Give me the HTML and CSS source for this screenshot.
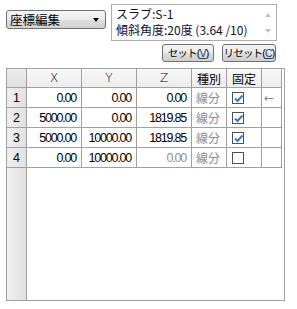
FILE: index.html
```html
<!DOCTYPE html>
<html lang="ja">
<head>
<meta charset="utf-8">
<link rel="stylesheet" href="styles.css">
</head>
<body>
<div class="top">
  <div class="select"><span>座標編集</span><span class="caret"></span></div>
  <div class="info">
    <div class="info-text">スラブ:S-1<br>傾斜角度:20度 (3.64 /10)</div>
    <div class="info-scroll"><span class="up"></span><span class="down"></span></div>
  </div>
</div>
<div class="actions">
  <button class="btn b1">セット(<u>V</u>)</button>
  <button class="btn b2">リセット(<u>C</u>)</button>
</div>
<div class="grid">
  <table>
    <tr class="head">
      <td class="rh c0"></td><td class="c1">X</td><td class="c2">Y</td><td class="c3">Z</td><td class="c4">種別</td><td class="c5">固定</td><td class="c6"></td>
    </tr>
    <tr>
      <td class="rh">1</td><td class="num">0.00</td><td class="num">0.00</td><td class="num">0.00</td><td class="kind">線分</td><td class="chk"><span class="box on"><svg width="11" height="11" viewBox="0 0 11 11"><path d="M2 5.5 L4.5 8 L9.5 2.5" fill="none" stroke="#3f74c0" stroke-width="2"/></svg></span></td><td class="arrow">←</td>
    </tr>
    <tr>
      <td class="rh">2</td><td class="num">5000.00</td><td class="num">0.00</td><td class="num">1819.85</td><td class="kind">線分</td><td class="chk"><span class="box on"><svg width="11" height="11" viewBox="0 0 11 11"><path d="M2 5.5 L4.5 8 L9.5 2.5" fill="none" stroke="#3f74c0" stroke-width="2"/></svg></span></td><td></td>
    </tr>
    <tr>
      <td class="rh">3</td><td class="num">5000.00</td><td class="num">10000.00</td><td class="num">1819.85</td><td class="kind">線分</td><td class="chk"><span class="box on"><svg width="11" height="11" viewBox="0 0 11 11"><path d="M2 5.5 L4.5 8 L9.5 2.5" fill="none" stroke="#3f74c0" stroke-width="2"/></svg></span></td><td></td>
    </tr>
    <tr>
      <td class="rh">4</td><td class="num">0.00</td><td class="num">10000.00</td><td class="num dim">0.00</td><td class="kind">線分</td><td class="chk"><span class="box"></span></td><td></td>
    </tr>
  </table>
</div>
</body>
</html>
```
FILE: styles.css
```css
body {
  margin: 0;
  width: 297px;
  height: 309px;
  background: #fff;
  font-family: "Noto Sans CJK JP", sans-serif;
  font-size: 12px;
  color: #000;
  overflow: hidden;
}
.top {
  display: flex;
  align-items: flex-start;
  gap: 5px;
  padding: 4px 0 0 6px;
}
.select {
  margin-top: 6px;
  width: 100px;
  height: 19px;
  box-sizing: border-box;
  border: 1px solid #707070;
  border-radius: 3px;
  background: linear-gradient(#f4f4f4, #ececec 50%, #dedede 50%, #d2d2d2);
  display: flex;
  align-items: center;
  justify-content: space-between;
  padding: 0 6px 0 3px;
  font-size: 12.5px;
  line-height: 17px;
}
.caret {
  width: 0;
  height: 0;
  border-left: 3.5px solid transparent;
  border-right: 3.5px solid transparent;
  border-top: 4px solid #000;
}
.info {
  width: 166px;
  height: 37px;
  box-sizing: border-box;
  border: 1px solid #abadb3;
  display: flex;
}
.info-text {
  flex: 1;
  padding: 1px 4px;
  font-size: 12px;
  line-height: 16px;
  color: #101030;
  white-space: nowrap;
}
.info-scroll {
  width: 17px;
  display: flex;
  flex-direction: column;
  justify-content: space-between;
  align-items: center;
  padding: 8px 0 7px;
  box-sizing: border-box;
}
.up, .down {
  width: 0;
  height: 0;
  border-left: 3.5px solid transparent;
  border-right: 3.5px solid transparent;
}
.up { border-bottom: 4px solid #c2c2c2; }
.down { border-top: 4px solid #c2c2c2; }
.actions {
  display: flex;
  justify-content: flex-end;
  gap: 8px;
  padding-right: 21px;
  margin-top: 3px;
}
.btn {
  height: 18px;
  box-sizing: border-box;
  border: 1px solid #707070;
  border-radius: 3px;
  background: linear-gradient(#f3f3f3, #ebebeb 50%, #dddddd 50%, #cfcfcf);
  font-family: "Liberation Sans", "Noto Sans CJK JP", sans-serif;
  font-size: 10.5px;
  letter-spacing: -0.8px;
  line-height: 14px;
  padding: 0;
  color: #000;
  white-space: nowrap;
  text-align: center;
}
.b1 { width: 52px; }
.b2 { width: 54px; }
.btn u { color: #1a3d8f; }
.grid {
  margin: 6px 0 0 6px;
  width: 279px;
  height: 233px;
  box-sizing: border-box;
  border: 1px solid #a0a0a0;
  background:
    linear-gradient(#a0a0a0, #a0a0a0) 19px 0 / 1px 100% no-repeat,
    linear-gradient(to right, #f0f0f0, #e0e0e0) 0 0 / 19px 100% no-repeat,
    #fff;
}
table {
  border-collapse: separate;
  border-spacing: 0;
  table-layout: fixed;
  width: 275px;
}
td {
  box-sizing: border-box;
  height: 20px;
  padding: 0;
  border-right: 1px solid #a0a0a0;
  border-bottom: 1px solid #a0a0a0;
  white-space: nowrap;
  overflow: hidden;
  line-height: 18px;
}
.head td {
  height: 19px;
  background: linear-gradient(#f8f8f8, #ececec);
  text-align: center;
  font-size: 12px;
  line-height: 17px;
}
.head .c1, .head .c2, .head .c3 {
  font-family: "DejaVu Sans", sans-serif;
  font-weight: 200;
  font-size: 12px;
}
.c0 { width: 20px; }
.c1 { width: 55px; }
.c2 { width: 55px; }
.c3 { width: 55px; }
.c4 { width: 35px; }
.c5 { width: 35px; }
.c6 { width: 20px; }
td.rh {
  background: transparent;
  padding-left: 6px;
  font-family: "Liberation Sans", sans-serif;
  font-size: 12.5px;
}
.head td.rh { background: linear-gradient(#ececec, #e0e0e0); }
.num {
  text-align: right;
  padding-right: 5px;
  font-family: "Liberation Sans", sans-serif;
  font-size: 12.5px;
  letter-spacing: -1.2px;
}
.num.dim { color: #909090; }
.kind {
  padding-left: 4px;
  color: #8a8a8a;
  font-size: 12px;
}
.chk { padding-left: 5px; }
.box {
  display: block;
  width: 12px;
  height: 12px;
  box-sizing: border-box;
  border: 1px solid #505050;
  background: #fff;
}
.box svg { display: block; margin: 0; }
.arrow {
  color: #8a8a8a;
  font-family: "DejaVu Sans", sans-serif;
  font-size: 12px;
  padding-left: 2px;
}
```
